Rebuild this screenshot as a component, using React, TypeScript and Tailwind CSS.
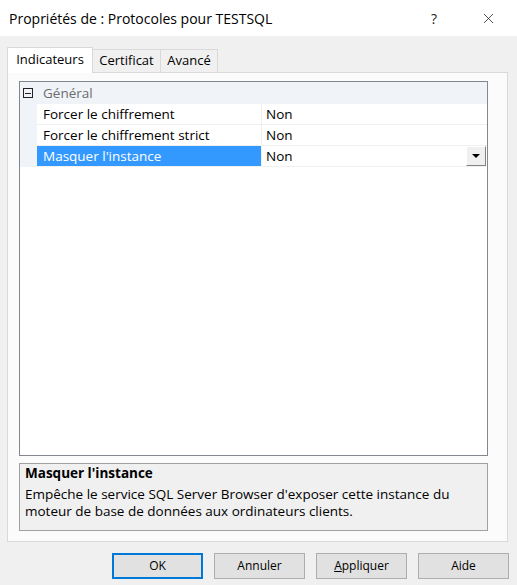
import { X } from "lucide-react";

const rows = [
  { name: "Forcer le chiffrement", value: "Non" },
  { name: "Forcer le chiffrement strict", value: "Non" },
  { name: "Masquer l'instance", value: "Non", selected: true },
];

function DialogButton({ label, primary }: { label: React.ReactNode; primary?: boolean }) {
  return (
    <button
      className={
        primary
          ? "flex h-[26px] w-[91px] items-center justify-center border-2 border-[#0078d7] bg-[#e1e1e1] text-[12px] text-black"
          : "flex h-[26px] w-[91px] items-center justify-center border border-[#adadad] bg-[#e1e1e1] text-[12px] text-black"
      }
    >
      {label}
    </button>
  );
}

export default function App() {
  return (
    <div
      className="flex h-[585px] w-[517px] flex-col bg-[#f0f0f0] text-black"
      style={{ fontFamily: '"Open Sans", "Noto Sans", sans-serif' }}
    >
      {/* title bar */}
      <div className="flex h-[36px] shrink-0 items-center bg-white pl-[9px]">
        <span className="text-[14px] text-black">Propriétés de : Protocoles pour TESTSQL</span>
        <span className="ml-auto mr-[43px] text-[14px] text-[#222]">?</span>
        <X className="mr-[20px] h-[17px] w-[17px] text-[#222]" strokeWidth={1.1} />
      </div>

      <div className="flex flex-col px-[7px] pt-[11px]">
        {/* tabs */}
        <div className="relative z-10 flex h-[25px] items-end">
          <div className="-mb-px flex h-[26px] w-[86px] items-start justify-center border border-b-0 border-[#d9d9d9] bg-white pt-[2px] text-[13px]">
            Indicateurs
          </div>
          <div className="flex h-[23px] w-[68px] items-center justify-center border border-b-0 border-l-0 border-[#d9d9d9] bg-[#f0f0f0] text-[13px]">
            Certificat
          </div>
          <div className="flex h-[23px] w-[57px] items-center justify-center border border-b-0 border-l-0 border-[#d9d9d9] bg-[#f0f0f0] text-[13px]">
            Avancé
          </div>
        </div>

        {/* tab page */}
        <div className="flex h-[470px] w-[501px] flex-col border border-[#d9d9d9] bg-[#fbfbfb] pl-[11px] pt-[8px]">
          {/* property grid */}
          <div className="flex h-[375px] w-[469px] flex-col border border-[#828790] bg-white">
            <div className="flex h-[22px] items-center bg-[#f0f4f9]">
              <div className="ml-[3px] flex h-[10px] w-[10px] items-center justify-center border border-[#222]">
                <div className="h-px w-[6px] bg-[#222]" />
              </div>
              <span className="ml-[10px] text-[13.5px] text-[#6d6d6d]">Général</span>
            </div>
            {rows.map((r) => (
              <div key={r.name} className="flex h-[21px] bg-[#f0f4f9]">
                <div
                  className={
                    r.selected
                      ? "ml-[17px] flex w-[224px] items-center border-b border-[#f0f0f0] bg-[#3399ff] pl-[6px] text-[13.5px] text-white"
                      : "ml-[17px] flex w-[224px] items-center border-b border-[#f0f0f0] bg-white pl-[6px] text-[13.5px]"
                  }
                >
                  {r.name}
                </div>
                <div className="flex flex-1 items-center border-b border-l border-[#f0f0f0] bg-white pl-[4px] text-[13.5px]">
                  {r.value}
                  {r.selected && (
                    <div className="ml-auto mr-[1px] flex h-[20px] w-[20px] items-center justify-center border border-t-white border-l-white border-r-[#828282] border-b-[#828282] bg-[#f0f0f0]">
                      <svg width="8" height="4" viewBox="0 0 8 4">
                        <path d="M0 0h8L4 4z" fill="#000" />
                      </svg>
                    </div>
                  )}
                </div>
              </div>
            ))}
          </div>

          {/* description */}
          <div className="mt-[7px] flex h-[68px] w-[469px] flex-col border border-[#a0a0a0] bg-[#f0f0f0] pl-[5px] pt-[1px] text-[13.5px] leading-[17px]">
            <span className="font-bold">Masquer l'instance</span>
            <span className="mt-[4px]">
              Empêche le service SQL Server Browser d'exposer cette instance du
              <br />
              moteur de base de données aux ordinateurs clients.
            </span>
          </div>
        </div>

        {/* buttons */}
        <div className="mt-[11px] flex justify-end gap-[11px] pr-[1px]">
          <DialogButton label="OK" primary />
          <DialogButton label="Annuler" />
          <DialogButton
            label={
              <span>
                <u>A</u>ppliquer
              </span>
            }
          />
          <DialogButton label="Aide" />
        </div>
      </div>
    </div>
  );
}
